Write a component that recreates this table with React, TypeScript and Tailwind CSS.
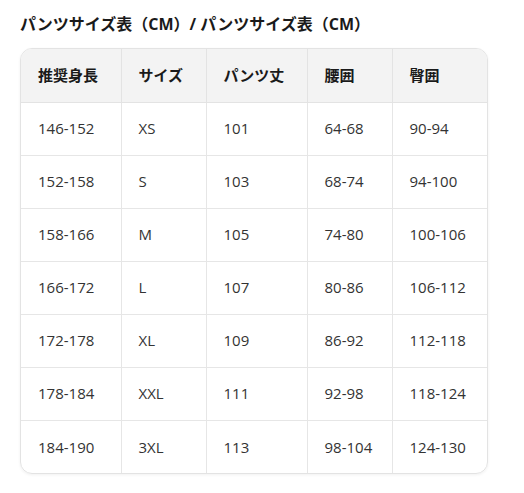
import React from "react";

const rows = [
  ["146-152", "XS", "101", "64-68", "90-94"],
  ["152-158", "S", "103", "68-74", "94-100"],
  ["158-166", "M", "105", "74-80", "100-106"],
  ["166-172", "L", "107", "80-86", "106-112"],
  ["172-178", "XL", "109", "86-92", "112-118"],
  ["178-184", "XXL", "111", "92-98", "118-124"],
  ["184-190", "3XL", "113", "98-104", "124-130"],
];

const widths = ["w-[100px]", "w-[85px]", "w-[101px]", "w-[85px]", "w-[96px]"];
const heads = ["推奨身長", "サイズ", "パンツ丈", "腰囲", "臀囲"];

export default function App() {
  return (
    <div
      className="w-[524px] h-[493px] bg-white px-5 pt-3"
      style={{ fontFamily: '"Open Sans", "Noto Sans CJK JP", sans-serif' }}
    >
      <h2 className="text-[16px] font-bold leading-6 text-[#1a1a1a] mb-3">
        パンツサイズ表（CM）/ パンツサイズ表（CM）
      </h2>
      <div className="w-[468px] rounded-xl border border-[#e3e3e3] overflow-hidden shadow-[0_1px_3px_rgba(0,0,0,0.06)]">
        <table className="w-full border-collapse table-fixed">
          <colgroup>
            {widths.map((w, i) => (
              <col key={i} className={w} />
            ))}
          </colgroup>
          <thead>
            <tr className="bg-[#f3f3f3] h-[53px]">
              {heads.map((h, i) => (
                <th
                  key={i}
                  className={`text-left pl-[17px] text-[15px] font-bold text-[#1a1a1a] border-b border-[#e3e3e3] ${
                    i < 4 ? "border-r" : ""
                  }`}
                >
                  {h}
                </th>
              ))}
            </tr>
          </thead>
          <tbody>
            {rows.map((r, ri) => (
              <tr key={ri} className="h-[53px]">
                {r.map((c, ci) => (
                  <td
                    key={ci}
                    className={`pl-[17px] text-[15px] text-[#333333] border-[#e6e6e6] ${
                      ci < 4 ? "border-r" : ""
                    } ${ri < rows.length - 1 ? "border-b" : ""}`}
                  >
                    {c}
                  </td>
                ))}
              </tr>
            ))}
          </tbody>
        </table>
      </div>
    </div>
  );
}
